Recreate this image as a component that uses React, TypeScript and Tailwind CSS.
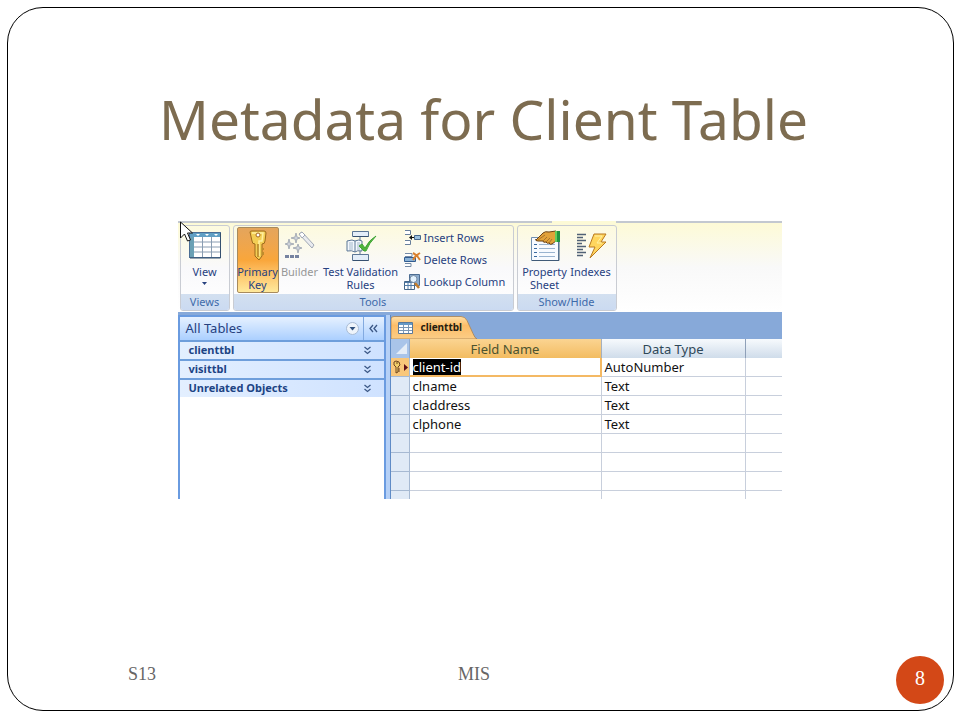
import type { ReactNode } from "react";

const navy = "#27417f";

function TableIcon() {
  return (
    <svg width="32" height="32" viewBox="0 0 32 32" aria-hidden="true">
      <path d="M0 2h32v26H0z" fill="#4a6d94" />
      <path d="M1 3h30v4H1z" fill="#5f9fc4" />
      <path d="M1 7h4v20H1z" fill="#69a0b5" />
      <path d="M5 7h26v20H5z" fill="#fff" />
      <path d="M5 12h26M5 17h26M5 22h26M13.500 7v20M22.500 7v20" stroke="#8a9db2" strokeWidth="1" />
      <path d="M7 4h4l-2 2zM16 4h4l-2 2zM25 4h4l-2 2z" fill="#fff" />
      <path d="M31.500 3v25H1" fill="none" stroke="#35506f" />
    </svg>
  );
}

function KeyIcon() {
  return (
    <svg width="32" height="32" viewBox="0 0 32 32" aria-hidden="true">
      <path
        d="M8 2q0-1 2-1h12q2 0 2 2l-1 8q0 3-3 3v12l-3 4-4-4V14q-3 0-3-3z"
        fill="#f3ce55"
        stroke="#9c6a1b"
      />
      <path d="M10 3h11l-1 8h-3v15" fill="none" stroke="#fff0a0" strokeWidth="1.500" />
      <path d="M16 14v13" stroke="#b48225" strokeWidth="1.500" />
      <path d="M20 18h2v2h-2zM20 22h2v3h-2z" fill="#c08b2c" />
      <circle cx="16" cy="5" r="2" fill="#fff" stroke="#a5671b" />
    </svg>
  );
}

function WandIcon() {
  return (
    <svg width="32" height="32" viewBox="0 0 32 32" aria-hidden="true">
      <path d="M15 4l3-2 12 13-2 3z" fill="#e9ebef" stroke="#a0a8b5" />
      <path d="M15 4l3-2 3 3-3 3z" fill="#fff" stroke="#a0a8b5" />
      <path
        d="M12 3l1 4 3 1-3 1-1 4-1-4-4-1 4-1zM5 9l1 4 4 1-4 1-1 4-1-4-3-1 3-1zM14 14l1 3 3 1-3 1-1 4-1-4-4-1 4-1z"
        fill="#cdd2da"
        stroke="#8f98a6"
        strokeWidth="0.700"
      />
      <path d="M1 25h4v3H1zM6 25h4v3H6zM11 25h4v3h-4z" fill="#7683a0" />
    </svg>
  );
}

function ValidationIcon() {
  return (
    <svg width="32" height="32" viewBox="0 0 32 32" aria-hidden="true">
      <path d="M15 6v19" stroke="#5b7695" />
      <path d="M7.500 1.500h16v5h-16zM7.500 24.500h16v6h-16z" fill="#e3edf8" stroke="#5b7695" />
      <path d="M8 6.500h15.500M8 30.500h15.500" stroke="#36506f" />
      <path d="M2 11q6-2 8 0 4-2 7 0v10q-5-1-7 1-3-2-8-1z" fill="#f4f8fd" stroke="#5b7695" />
      <path d="M10 11v11" stroke="#5b7695" />
      <path d="M4 13h4M4 15h4M4 17h4M4 19h4M12 13h3M12 15h3M12 17h3M12 19h3" stroke="#a3b7cb" />
      <path d="M14 16l3-2 3 4Q24 10 31 6 24 13 21 21h-2z" fill="#4fb43a" stroke="#3fa436" />
    </svg>
  );
}

function InsertRowsIcon() {
  return (
    <svg width="18" height="18" viewBox="0 0 18 18" aria-hidden="true">
      <path d="M1 1.500h5.500v4H1M1 11.500h5.500v4H1" fill="#fff" stroke="#687f9b" />
      <path d="M10.500 6.500h6v4h-6z" fill="#9bc1df" stroke="#46678c" />
      <path d="M10 8.500H6" stroke="#111" />
      <path d="M5 8.500l3-2.500v5z" fill="#111" />
    </svg>
  );
}

function DeleteRowsIcon() {
  return (
    <svg width="18" height="18" viewBox="0 0 18 18" aria-hidden="true">
      <path d="M1 2.500h7v3H1M1 12.500h6v3H1" fill="#fff" stroke="#748aa5" />
      <path d="M.500 6.500h11v4H.500z" fill="#8cb3d7" stroke="#315c91" />
      <path d="M9 2q4 2 7 7M16 2q-5 3-7 7" fill="none" stroke="#d9812f" strokeWidth="2" />
    </svg>
  );
}

function LookupIcon() {
  return (
    <svg width="18" height="18" viewBox="0 0 18 18" aria-hidden="true">
      <path d="M5.500 1.500h10v11h-10z" fill="#8aabce" stroke="#4c6c92" />
      <path d="M.500 8.500h10v8H.500z" fill="#fff" stroke="#446587" />
      <path d="M.500 9.500h10M.500 12.500h10M4 9v7M7 9v7" stroke="#507ba7" />
      <path d="M11 10l4 5" stroke="#c47d2c" strokeWidth="2.500" />
      <circle cx="9.500" cy="6" r="3.500" fill="#e2f2ff" stroke="#788da4" />
    </svg>
  );
}

function PropertyIcon() {
  return (
    <svg width="32" height="32" viewBox="0 0 32 32" aria-hidden="true">
      <path d="M2.500 7.500h27v23h-27z" fill="#f7faff" stroke="#6f8eb0" />
      <path d="M3 30.500h27v-22" fill="none" stroke="#405a77" />
      <path d="M5 14.500h3M5 18.500h3M5 22.500h3M5 26.500h3" stroke="#39699f" />
      <path d="M10 14.500h16M10 18.500h16M10 22.500h16M10 26.500h16" stroke="#99b3d0" />
      <path
        d="M7 10l7-7q2-2 6-1l7-1v10l-4 3q-2 1-3-1-2 1-3-1-3 1-3-1H9q-3 0-2-2z"
        fill="#e2a239"
        stroke="#6b4215"
      />
      <path d="M9 10l7-5M14 11l4-4M17 12l4-4M20 13l3-4" stroke="#a8742a" />
      <path d="M26 1h5v11h-5z" fill="#219442" />
      <path d="M26 1h2v11h-2z" fill="#66ce5a" />
    </svg>
  );
}

function IndexesIcon() {
  return (
    <svg width="32" height="32" viewBox="0 0 32 32" aria-hidden="true">
      <path
        d="M2 4.500h9M2 7.500h6M2 10.500h9M2 13.500h5M2 16.500h9M2 19.500h6M2 22.500h9M2 25.500h6"
        stroke="#506176"
        strokeWidth="1.500"
      />
      <path d="M19 4h12l-5 8h5L15 28l5-11h-6z" fill="#ffd65e" stroke="#b9791f" />
      <path d="M20 6h7l-5 7h5" fill="none" stroke="#fff1a3" />
    </svg>
  );
}

function Chevrons({ left = false }: { left?: boolean }) {
  return (
    <svg width="9" height="9" viewBox="0 0 9 9" fill="none" stroke="#3c5886" strokeWidth="1.300" aria-hidden="true">
      {left ? (
        <path d="M4 1L1 4.500 4 8M8 1L5 4.500 8 8" />
      ) : (
        <path d="M1.500 1l3 2.500 3-2.500M1.500 5l3 2.500 3-2.500" />
      )}
    </svg>
  );
}

function Group({ title, children }: { title: string; children: ReactNode }) {
  return (
    <section className="flex h-[86px] flex-col overflow-hidden rounded-[3px] border border-[#c9ccd3] bg-linear-to-b from-[#fdfade] via-[#f9f9fb] to-white">
      <div className="flex flex-1 items-start justify-center px-[3px] pt-px">{children}</div>
      <h2 className="h-4 bg-linear-to-b from-[#d3e0f0] to-[#cbdaf1] text-center text-[11px] leading-4 text-[#3e6aaa]">
        {title}
      </h2>
    </section>
  );
}

function BigButton({ icon, width, tone = "", children }: { icon: ReactNode; width: string; tone?: string; children: ReactNode }) {
  return (
    <button
      type="button"
      className={`flex h-[66px] flex-col items-center gap-[3px] rounded-[2px] border pt-0.5 text-center text-[11px] leading-[13px] ${width} ${tone || "border-transparent text-[#27417f]"}`}
    >
      {icon}
      {children}
    </button>
  );
}

function SmallButton({ icon, children }: { icon: ReactNode; children: ReactNode }) {
  return (
    <button type="button" className="flex h-[22px] items-center gap-0.5 text-[11px] whitespace-nowrap text-[#27417f]">
      {icon}
      {children}
    </button>
  );
}

function Ribbon() {
  return (
    <div className="relative flex h-[91px] gap-[3px] border-t-2 border-[#c3c8d0] bg-linear-to-b from-[#fdfad6] via-[#f9f9f9] to-white pt-0.5 pl-0.5">
      <div className="absolute -top-0.5 left-[374px] h-0.5 w-16 bg-[#fdfad6]" />
      <Group title="Views">
        <BigButton icon={<TableIcon />} width="w-[42px]">
          <span className="flex flex-col items-center">
            View
            <svg width="7" height="12" viewBox="0 0 7 12" aria-hidden="true">
              <path d="M1 4h5l-2.500 3z" fill={navy} />
            </svg>
          </span>
        </BigButton>
      </Group>
      <Group title="Tools">
        <BigButton
          icon={<KeyIcon />}
          width="w-[42px]"
          tone="border-[#a88b5c] bg-linear-to-b from-[#e4a55c] via-[#f9a63a] to-[#ffe99b] text-[#27417f]"
        >
          Primary Key
        </BigButton>
        <BigButton icon={<WandIcon />} width="w-[42px]" tone="border-transparent text-[#979797]">
          Builder
        </BigButton>
        <BigButton icon={<ValidationIcon />} width="w-[80px]">
          Test Validation Rules
        </BigButton>
        <div className="flex w-[109px] flex-col pl-[3px]">
          <SmallButton icon={<InsertRowsIcon />}>Insert Rows</SmallButton>
          <SmallButton icon={<DeleteRowsIcon />}>Delete Rows</SmallButton>
          <SmallButton icon={<LookupIcon />}>Lookup Column</SmallButton>
        </div>
      </Group>
      <Group title="Show/Hide">
        <BigButton icon={<PropertyIcon />} width="w-[48px]">
          Property Sheet
        </BigButton>
        <BigButton icon={<IndexesIcon />} width="w-[44px]">
          Indexes
        </BigButton>
      </Group>
      <svg className="absolute -top-0.5 left-0.5" width="14" height="22" viewBox="0 0 14 22" aria-hidden="true">
        <path d="M.500 1v16l4-4 3 7 3-1-3-7h5z" fill="#fff" stroke="#111" />
      </svg>
    </div>
  );
}

const navGroups = ["clienttbl", "visittbl", "Unrelated Objects"];

function NavigationPane() {
  return (
    <nav className="flex w-[208px] shrink-0 flex-col border-x-2 border-t-2 border-[#6a9be0] bg-white">
      <div className="flex h-[23px] items-center bg-linear-to-b from-[#e6f1ff] to-[#abcfff]">
        <button type="button" className="flex h-full flex-1 items-center justify-between pr-1 pl-1.5 text-[13px] text-[#27417f]">
          All Tables
          <svg width="13" height="13" viewBox="0 0 13 13" aria-hidden="true">
            <circle cx="6.500" cy="6.500" r="6" fill="#eef4fb" stroke="#a8bbd4" />
            <path d="M3.500 5h6l-3 3.500z" fill="#31527f" />
          </svg>
        </button>
        <button type="button" aria-label="Collapse pane" className="flex h-full w-[21px] items-center justify-center border-l border-[#82aae0]">
          <Chevrons left />
        </button>
      </div>
      {navGroups.map((name) => (
        <button
          key={name}
          type="button"
          className="flex h-[19px] items-center justify-between border-t-2 border-[#6e9edb] bg-linear-to-r from-[#e3efff] to-[#cfe2ff] pr-3 pl-[9px] text-[11px] font-bold text-[#1d4485]"
        >
          {name}
          <Chevrons />
        </button>
      ))}
    </nav>
  );
}

const rows = [
  ["client-id", "AutoNumber"],
  ["clname", "Text"],
  ["claddress", "Text"],
  ["clphone", "Text"],
  ["", ""],
  ["", ""],
  ["", ""],
  ["", ""],
];

function DesignGrid() {
  return (
    <table className="w-full table-fixed border-separate border-spacing-0 text-left text-[13px] leading-[18px] text-[#111]">
      <colgroup>
        <col className="w-[19px]" />
        <col className="w-[192px]" />
        <col className="w-[144px]" />
        <col />
      </colgroup>
      <thead>
        <tr className="h-[19px] text-center">
          <td className="border-r border-[#8fa9cc] bg-[#a9c4e9] p-0">
            <svg className="ml-auto" width="14" height="14" viewBox="0 0 14 14" aria-hidden="true">
              <path d="M12 1v11H1z" fill="#e5edf7" />
            </svg>
          </td>
          <th className="border-r border-[#a5b0be] bg-linear-to-b from-[#fbd491] to-[#f3bc60] p-0 font-normal text-[#4b5330]">Field Name</th>
          <th className="border-r border-[#8fa0b8] bg-linear-to-b from-[#f7fafd] to-[#cfdcea] p-0 font-normal text-[#2f4858]">Data Type</th>
          <th aria-label="Description" className="bg-linear-to-b from-[#f7fafd] to-[#cfdcea] p-0" />
        </tr>
      </thead>
      <tbody>
        {rows.map(([name, type], i) => (
          <tr key={i} className="h-[19px]">
            <td className={`border-r border-b border-[#a6b9d2] p-0 ${i === 0 ? "bg-[#f9c77a]" : "bg-[#e0eaf6]"}`}>
              {i === 0 && (
                <svg width="18" height="17" viewBox="0 0 18 17" aria-hidden="true">
                  <path d="M3 3l2-1 3 1 1 3-2 2v5l-2 1V8L3 6z" fill="#f2cf69" stroke="#6e4520" />
                  <path d="M5 4h2M7 10h2M7 12h2" stroke="#6e4520" />
                  <path d="M13 5l4 3.500-4 3.500z" fill="#5e0f18" />
                </svg>
              )}
            </td>
            <td className={`border-r border-b p-0 ${i === 0 ? "border-[#f4b964] shadow-[inset_-1px_-1px_0_0_#f4b964]" : "border-[#c8cfdc]"}`}>
              <span className={i === 0 ? "ml-[3px] block h-4 w-fit bg-black leading-4 text-white" : "pl-[3px]"}>{name}</span>
            </td>
            <td className="border-r border-b border-[#c8cfdc] p-0 pl-[3px]">{type}</td>
            <td className="border-b border-[#c8cfdc] p-0" />
          </tr>
        ))}
      </tbody>
    </table>
  );
}

function DocumentArea() {
  return (
    <div className="ml-1 flex min-w-0 flex-1 flex-col border-l border-[#5f8bc6] bg-white">
      <div className="flex h-6 bg-[#87a9d9] pt-px">
        <button type="button" className="relative isolate flex h-[23px] w-[86px] items-center gap-2 pl-[7px] text-[10px] font-bold text-[#241c10]">
          <svg className="absolute inset-0 -z-10" width="86" height="23" viewBox="0 0 86 23" aria-hidden="true">
            <defs>
              <linearGradient id="tabFill" x1="0" x2="0" y1="0" y2="1">
                <stop offset="0" stopColor="#ffe0a8" />
                <stop offset="0.400" stopColor="#fdbd68" />
                <stop offset="1" stopColor="#fbcd86" />
              </linearGradient>
            </defs>
            <path d="M0 23V3Q0 .500 3 .500h67q4 0 6 4l6 13q2 5 4 5.500z" fill="url(#tabFill)" stroke="#a98250" strokeWidth="0.800" />
          </svg>
          <svg width="15" height="12" viewBox="0 0 15 12" aria-hidden="true">
            <path d="M.500.500h14v11H.500z" fill="#fff" stroke="#59789a" />
            <path d="M1 1h13v2H1z" fill="#639ac9" />
            <path d="M1 5.500h13M1 8.500h13M5.500 1v10M10.500 1v10" stroke="#7b97b5" />
          </svg>
          clienttbl
        </button>
      </div>
      <DesignGrid />
    </div>
  );
}

function AccessWindow() {
  return (
    <div className="mx-auto h-[278px] w-full max-w-[604px] overflow-hidden bg-white font-['Noto_Sans',sans-serif]">
      <Ribbon />
      <div className="flex h-[187px] overflow-hidden border-t-3 border-[#87a9d9] bg-[#b5d0f6]">
        <NavigationPane />
        <DocumentArea />
      </div>
    </div>
  );
}

export default function App() {
  return (
    <div className="flex min-h-screen bg-white pt-[7px] pr-[6px] pb-[9px] pl-[7px]">
      <main className="flex flex-1 flex-col rounded-[36px] border border-black">
        <h1 className="mt-[75px] pl-1.5 text-center font-['Noto_Sans',sans-serif] text-[55px] leading-[72px] text-[#7d6c50]">
          Metadata for Client Table
        </h1>
        <div className="mt-[66px] pr-[18px] pl-4">
          <AccessWindow />
        </div>
        <footer className="mt-auto flex items-center pr-[9px] pb-1.5 pl-[120px] font-['Liberation_Serif',serif] text-[18px] text-[#666]">
          <span className="w-[330px] pb-3">S13</span>
          <span className="flex-1 pb-3">MIS</span>
          <span className="flex size-12 items-center justify-center rounded-full bg-[#d34817] pb-1 text-[20px] text-white">8</span>
        </footer>
      </main>
    </div>
  );
}
